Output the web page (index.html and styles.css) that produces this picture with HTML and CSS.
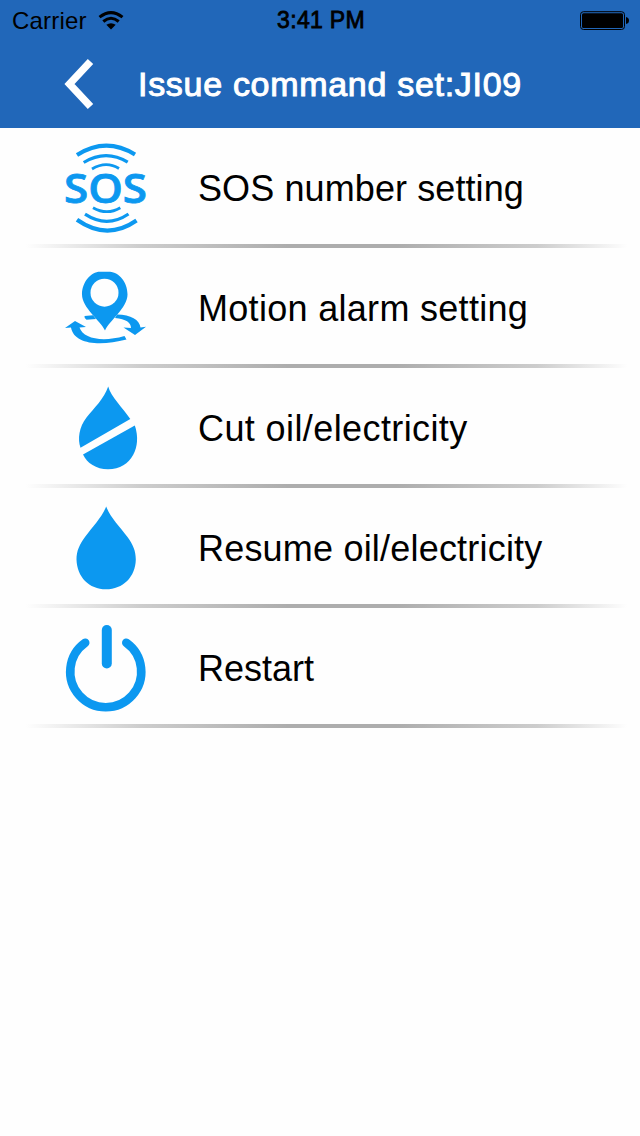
FILE: index.html
```
<!DOCTYPE html>
<html lang="en">
<head>
    <meta charset="UTF-8">
    <title>Issue command set</title>
    <link rel="stylesheet" href="styles.css">
</head>
<body>

    <header>
        <div class="status-bar">
            <div class="carrier">
                <span>Carrier</span>
                <svg width="26" height="20" viewBox="0 0 26 20">
                    <path d="M1.5 6.2Q13 -3 24.500 6.200" fill="none" stroke="#000" stroke-width="3"/>
                    <path d="M5.300 10.500Q13 4 20.700 10.500" fill="none" stroke="#000" stroke-width="3"/>
                    <path d="M13 18.500L8.300 13.800Q13 10.500 17.700 13.800Z"/>
                </svg>
            </div>
            <span class="time">3:41 PM</span>
            <svg class="battery" width="50" height="20" viewBox="0 0 50 20">
                <rect x="0.500" y="0.700" width="44" height="17.800" rx="3" fill="none" stroke="#000"/>
                <rect x="2" y="2.200" width="41" height="14.800" rx="1.500"/>
                <path d="M46 6Q49 6.500 49 9.500Q49 12.500 46 13Z"/>
            </svg>
        </div>
        <div class="nav-bar">
            <a class="back" href="#" aria-label="Back">
                <svg width="32" height="52" viewBox="0 0 32 52">
                    <path d="M26.500 3.500L5.500 26L26.500 48.500" fill="none" stroke="#fff" stroke-width="7.400"/>
                </svg>
            </a>
            <h1>Issue command set:JI09</h1>
        </div>
    </header>

    <ul class="commands">
        <li>
            <svg class="icon" viewBox="0 0 120 116">
                <g class="line">
                    <path d="M27 27Q56 8.500 85 26.500" stroke-width="4.200"/>
                    <path d="M33.700 34.500Q56 21 77.700 34.200" stroke-width="3.200"/>
                    <path d="M42 41Q56 32.500 69 40.500" stroke-width="2.800"/>
                    <path d="M43 79.700Q57 87.700 70.300 79.700" stroke-width="2.800"/>
                    <path d="M35 86.200Q57 100.600 78.500 86" stroke-width="3.200"/>
                    <path d="M27 91.800Q57 113 86.500 92.500" stroke-width="4.200"/>
                </g>
                <text class="sos" x="14" y="74.500" textLength="83" lengthAdjust="spacingAndGlyphs">SOS</text>
            </svg>
            <span class="number">SOS number setting</span>
        </li>
        <li>
            <svg class="icon" viewBox="0 0 120 116">
                <path d="M55 82.500C51 73 32 60 32 46.500C32 34 41 23.800 50 23.800H60C69 24.500 77.500 34 77.500 46.500C77.500 60 59 73 55 82.500Z"/>
                <circle cx="54.500" cy="44.700" r="14" fill="#fefefe"/>
                <path d="M34.500 68L43 67.300L46 71L36.500 71.800Q34 70 34.500 68Z"/>
                <path d="M67 66.500C81 66.500 89.500 72 90.500 79.500L96 78.700L85 87L73.500 79.500L81 80C81 74.500 76 71 65 70Z"/>
                <path d="M15 80L25 73L36 79L29.500 79.500C33 90.500 52 94.500 74.500 88L76.500 91.500C50 98.500 24 96.500 21 79.500Z"/>
            </svg>
            <span class="motion">Motion alarm setting</span>
        </li>
        <li>
            <svg class="icon" viewBox="0 0 120 116">
                <path d="M58.200 18.500C61 29 73 40 80.300 51L30.500 79.800C27.500 71 29 59 36.500 49.500C44 40 54 31 58.200 18.500Z"/>
                <path d="M84.800 57.500C92 78 82 101.300 58 101.300C46 101.300 37 95 33 86.500Z"/>
            </svg>
            <span class="cut">Cut oil/electricity</span>
        </li>
        <li>
            <svg class="icon" viewBox="0 0 120 116">
                <path d="M56.200 18.500C60 29 70 39 77.500 49C83 56.500 85.800 63 85.800 71.500C85.500 89 73 101.300 56 101.300C39 101.300 27 89 26.500 71.500C26.500 63 29.500 56.500 35 49C42.500 39 52 29 56.200 18.500Z"/>
            </svg>
            <span class="resume">Resume oil/electricity</span>
        </li>
        <li>
            <svg class="icon" viewBox="0 0 120 116">
                <g class="line" stroke-linecap="round">
                    <path d="M35.200 34.800A35.500 35.500 0 1 0 76.300 34.800" stroke-width="8.600"/>
                    <path d="M56.800 22V55.500" stroke-width="10"/>
                </g>
            </svg>
            <span>Restart</span>
        </li>
    </ul>

</body>
</html>
```
FILE: styles.css
```
body {
    margin: 0;
    font-family: "Liberation Sans", Arial, sans-serif;
    background: #fefefe;
    color: #000;
}

header {
    height: 128px;
    background: #2167b9;
}

.status-bar {
    display: grid;
    grid-template-columns: 1fr auto 1fr;
    align-items: center;
    height: 40px;
    padding: 1px 10px 0 12px;
    box-sizing: border-box;
    font-size: 24px;
}

.carrier {
    display: flex;
    align-items: center;
    gap: 11px;
    letter-spacing: 0.2px;
}

.time {
    font-size: 23px;
    letter-spacing: 0.3px;
    -webkit-text-stroke: 0.8px #000;
}

.battery {
    justify-self: end;
}

.nav-bar {
    display: flex;
    align-items: center;
    height: 88px;
    padding-left: 64px;
}

.back {
    display: flex;
    width: 74px;
}

h1 {
    margin: 0;
    color: #fff;
    font-size: 34px;
    font-weight: normal;
    letter-spacing: 0.7px;
    -webkit-text-stroke: 1px #fff;
}

.commands {
    margin: 0;
    padding: 0;
    list-style: none;
}

.commands li {
    display: flex;
    align-items: center;
    height: 120px;
    padding-left: 50px;
    box-sizing: border-box;
    font-size: 36px;
    background: linear-gradient(to right, #fefefe 4%, #cdcdcd 22%, #adadad 45%, #adadad 62%, #cdcdcd 84%, #fefefe 98%) bottom / 100% 4px no-repeat;
}

.commands span {
    padding-top: 2px;
}

.number {
    letter-spacing: 0.1px;
}

.motion {
    letter-spacing: 0.3px;
}

.cut {
    letter-spacing: 0.4px;
}

.resume {
    letter-spacing: 0.2px;
}

.icon {
    width: 120px;
    height: 116px;
    margin: 0 28px 4px 0;
    fill: #0c98f0;
}

.line {
    fill: none;
    stroke: #0c98f0;
}

.sos {
    font-family: "Open Sans", "Noto Sans", sans-serif;
    font-size: 40px;
    font-weight: 600;
    stroke: #0c98f0;
    stroke-width: 0.8px;
}
```
